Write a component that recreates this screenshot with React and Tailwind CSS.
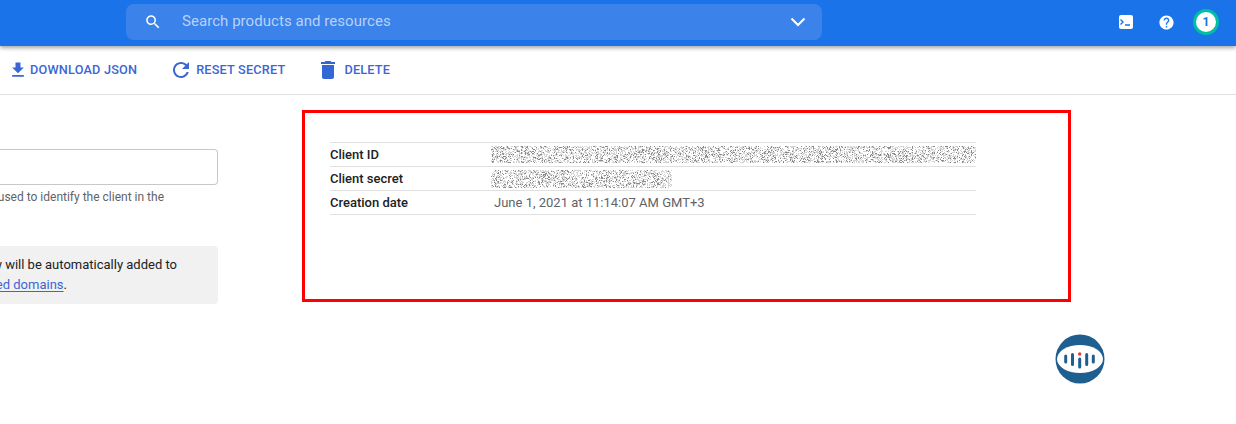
import React from "react";

const DOWNLOAD = "M19 9h-4V3H9v6H5l7 7 7-7zM5 18v2h14v-2H5z";
const REFRESH = "M17.65 6.35C16.2 4.9 14.21 4 12 4c-4.42 0-7.99 3.58-7.99 8s3.57 8 7.99 8c3.73 0 6.84-2.55 7.73-6h-2.08c-.82 2.33-3.04 4-5.65 4-3.31 0-6-2.69-6-6s2.69-6 6-6c1.66 0 3.14.69 4.22 1.78L13 11h7V4l-2.35 2.35z";
const TRASH = "M6 19c0 1.1.9 2 2 2h8c1.1 0 2-.9 2-2V7H6v12zM19 4h-3.5l-1-1h-5l-1 1H5v2h14V4z";
const SEARCH = "M15.5 14h-.79l-.28-.27C15.41 12.59 16 11.11 16 9.5 16 5.91 13.09 3 9.5 3S3 5.91 3 9.5 5.91 16 9.5 16c1.61 0 3.09-.59 4.23-1.57l.27.28v.79l5 4.99L20.49 19l-4.99-5zm-6 0C7.01 14 5 11.99 5 9.5S7.01 5 9.5 5 14 7.01 14 9.5 11.99 14 9.5 14z";
const HELP = "M12 2C6.48 2 2 6.48 2 12s4.48 10 10 10 10-4.48 10-10S17.52 2 12 2zm1 17h-2v-2h2v2zm2.07-7.75l-.9.92C13.45 12.9 13 13.5 13 15h-2v-.5c0-1.1.45-2.1 1.17-2.83l1.24-1.26c.37-.36.59-.86.59-1.41 0-1.1-.9-2-2-2s-2 .9-2 2H8c0-2.21 1.79-4 4-4s4 1.79 4 4c0 .88-.36 1.68-.93 2.25z";

function Icon({ d, className }) {
  return (
    <svg viewBox="0 0 24 24" className={className} fill="currentColor">
      <path d={d} />
    </svg>
  );
}

// scrambled blur over the secrets, same seed every render
function Noise({ width, height, seed }) {
  let s = seed;
  const next = () => {
    s = (s * 16807) % 2147483647;
    return s / 2147483647;
  };
  const dark = [];
  const light = [];
  for (let y = 0; y < height; y++) {
    for (let x = 0; x < width; x++) {
      const r = next();
      if (r < 0.14) dark.push(`M${x} ${y}h1v1h-1z`);
      else if (r < 0.48) light.push(`M${x} ${y}h1v1h-1z`);
    }
  }
  return (
    <svg width={width} height={height} shapeRendering="crispEdges">
      <path d={light.join("")} fill="#d2d2d2" />
      <path d={dark.join("")} fill="#8a8a8a" />
    </svg>
  );
}

function ToolButton({ d, label, iconClass, gap }) {
  return (
    <button className={`flex items-center ${gap} text-[12.7px] font-medium tracking-[0.2px] text-[#3b66d4]`}>
      <Icon d={d} className={iconClass} />
      <span>{label}</span>
    </button>
  );
}

function Row({ label, children }) {
  return (
    <div className="flex h-6 items-center border-b border-[#e0e0e0] text-[13px]">
      <div className="w-[161px] font-medium text-[#202124]">{label}</div>
      {children}
    </div>
  );
}

export default function App() {
  return (
    <div className="relative h-[424px] w-[1236px] overflow-hidden bg-white font-['Roboto',sans-serif]">
      {/* Top bar */}
      <header className="relative z-10 flex h-[46px] items-center bg-[#1a73e8] pb-[2px] shadow-[0_2px_4px_rgba(0,0,0,0.35)]">
        <div className="ml-[126px] flex h-9 w-[696px] items-center rounded-lg bg-[#3b82ea] pl-[18px] pr-[16px]">
          <Icon d={SEARCH} className="h-[18px] w-[18px] text-white" />
          <span className="ml-[20px] flex-1 pb-[1px] text-[15px] tracking-[0.05px] text-[#b7d2f7]">Search products and resources</span>
          <svg viewBox="0 0 16 10" className="h-[10px] w-[16px]" fill="none" stroke="white" strokeWidth="2">
            <path d="M1.5 1.5 8 8l6.5-6.5" />
          </svg>
        </div>
        <div className="ml-auto mr-[17px] flex items-center">
          <div className="flex h-[14px] w-[14px] items-center rounded-[2px] bg-white text-[#1a73e8]">
            <svg viewBox="0 0 14 14" className="h-[14px] w-[14px]" fill="none" stroke="currentColor" strokeWidth="1.4">
              <path d="M1.5 4.5 4 7 1.5 9.5M6 10h5" />
            </svg>
          </div>
          <Icon d={HELP} className="ml-[25px] h-[17px] w-[17px] text-white" />
          <div className="ml-[18px] flex h-[26px] w-[26px] items-center justify-center rounded-full border-[3px] border-[#00bfa5] bg-white text-[12px] font-bold text-[#1a73e8]">
            1
          </div>
        </div>
      </header>

      {/* Toolbar */}
      <div className="flex h-[49px] items-center border-b border-[#e0e0e0] pl-[8px]">
        <ToolButton d={DOWNLOAD} label="DOWNLOAD JSON" iconClass="h-[20px] w-[20px]" gap="gap-[2px]" />
        <div className="ml-[32px]">
          <ToolButton d={REFRESH} label="RESET SECRET" iconClass="h-[24px] w-[24px]" gap="gap-[3px]" />
        </div>
        <div className="ml-[31px]">
          <ToolButton d={TRASH} label="DELETE" iconClass="h-[24px] w-[24px] text-[#3367d6]" gap="gap-[4px]" />
        </div>
      </div>

      {/* Content */}
      <div className="flex">
        <div className="w-[218px] shrink-0 pt-[54px]">
          <div className="h-9 rounded-r border border-l-0 border-[#c8c8c8]" />
          <div className="mt-[4px] flex justify-end whitespace-nowrap pr-[54px] text-[12px] leading-4 text-[#5f6368]">
            This name is only used to identify the client in the
          </div>
          <div className="mt-[41px] h-[58px] rounded-r bg-[#f1f1f1] pt-[9px] text-[13px] leading-5 text-[#202124]">
            <div className="flex justify-end whitespace-nowrap pr-[41px]">
              The domains of the URIs you add below will be automatically added to
            </div>
            <div className="flex justify-end whitespace-nowrap pr-[151px]">
              <span>
                your OAuth consent screen as <span className="text-[#3b66d4] underline underline-offset-2">authorized domains</span>.
              </span>
            </div>
          </div>
        </div>

        <div className="ml-[84px] mt-[15px] h-[192px] w-[769px] shrink-0 border-[3px] border-[#ff0000] pl-[25px] pt-[29px]">
          <div className="w-[646px] border-t border-[#e0e0e0]">
            <Row label="Client ID">
              <Noise width={485} height={17} seed={48271} />
            </Row>
            <Row label="Client secret">
              <Noise width={181} height={18} seed={91357} />
            </Row>
            <Row label="Creation date">
              <span className="ml-[3px] text-[#5f6368]">June 1, 2021 at 11:14:07 AM GMT+3</span>
            </Row>
          </div>
        </div>
      </div>

      {/* Watermark logo */}
      <svg viewBox="0 0 50 50" className="absolute left-[1055px] top-[334px] h-[50px] w-[50px]">
        <circle cx="25" cy="25" r="24.5" fill="#1f5f8f" />
        <ellipse cx="25" cy="25" rx="23" ry="14" fill="white" />
        <g stroke="#1f5f8f" strokeWidth="3" strokeLinecap="round">
          <path d="M10.7 22v6M17.5 20.5v10M24.7 25v8M31.7 20.5v10M38.3 22v6" />
        </g>
        <circle cx="24.7" cy="20" r="1.7" fill="#e53935" />
      </svg>
    </div>
  );
}
